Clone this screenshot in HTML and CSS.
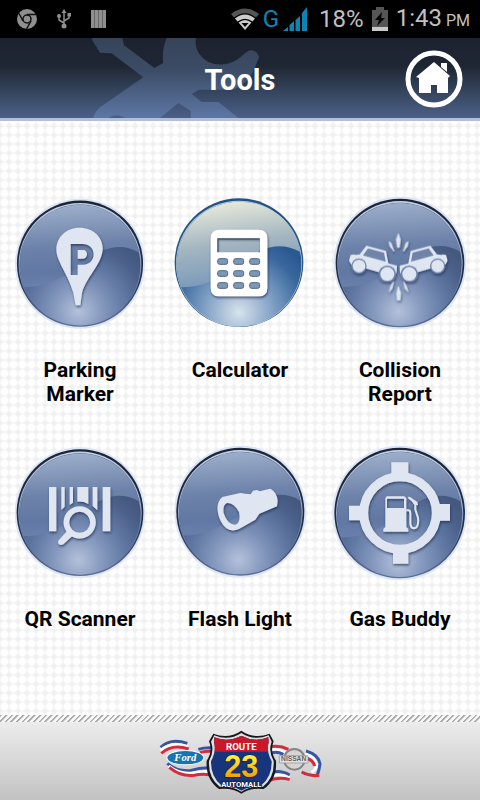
FILE: index.html
```html
<!DOCTYPE html>
<html lang="en">
<head>
    <meta charset="UTF-8">
    <meta name="viewport" content="width=device-width, initial-scale=1">
    <title>Tools</title>
    <link rel="stylesheet" href="styles.css">
</head>
<body>
    <!-- shared gradients and the glass disc -->
    <svg class="defs" width="0" height="0" aria-hidden="true">
        <defs>
            <radialGradient id="disc-base" gradientUnits="userSpaceOnUse" cx="195" cy="345" r="240">
                <stop offset="0" stop-color="#b3c1da"/>
                <stop offset="0.3" stop-color="#8699be"/>
                <stop offset="0.6" stop-color="#6078a3"/>
                <stop offset="0.85" stop-color="#4b618a"/>
                <stop offset="1" stop-color="#455980"/>
            </radialGradient>
            <linearGradient id="disc-gloss" x1="0.3" y1="0" x2="0.4" y2="1">
                <stop offset="0" stop-color="#9dafcb"/>
                <stop offset="0.5" stop-color="#6d82aa"/>
                <stop offset="0.8" stop-color="#6078a3"/>
                <stop offset="1" stop-color="#6a82ac"/>
            </linearGradient>
            <linearGradient id="disc-rim" x1="0" y1="0" x2="0" y2="1">
                <stop offset="0" stop-color="#1a2538"/>
                <stop offset="0.6" stop-color="#1f2c45"/>
                <stop offset="1" stop-color="#5c7196"/>
            </linearGradient>
            <linearGradient id="disc-edge" x1="0" y1="0" x2="0" y2="1">
                <stop offset="0" stop-color="#c3d0e4"/>
                <stop offset="0.5" stop-color="#94a7c6"/>
                <stop offset="0.8" stop-color="#5b7199"/>
            </linearGradient>
            <radialGradient id="calc-base" gradientUnits="userSpaceOnUse" cx="200" cy="350" r="240">
                <stop offset="0" stop-color="#d8e2ec"/>
                <stop offset="0.4" stop-color="#86a5c8"/>
                <stop offset="0.8" stop-color="#3a689e"/>
                <stop offset="1" stop-color="#2a5890"/>
            </radialGradient>
            <linearGradient id="calc-gloss" x1="0.3" y1="0" x2="0.5" y2="1">
                <stop offset="0" stop-color="#e9ecdc"/>
                <stop offset="0.5" stop-color="#a3b5c0"/>
                <stop offset="1" stop-color="#7597b9"/>
            </linearGradient>
            <linearGradient id="tool-fill" x1="0" y1="0" x2="0" y2="1">
                <stop offset="0" stop-color="#364459"/>
                <stop offset="0.4" stop-color="#3c4c66"/>
                <stop offset="1" stop-color="#5d77a5"/>
            </linearGradient>
            <filter id="shade" x="-20%" y="-20%" width="140%" height="140%">
                <feDropShadow dx="2" dy="5" stdDeviation="3" flood-color="#1d2b48" flood-opacity="0.7"/>
            </filter>
            <symbol id="disc" viewBox="0 0 400 400">
                <circle cx="200" cy="200" r="199" fill="#dce5f5"/>
                <circle cx="200" cy="200" r="193" fill="url(#disc-rim)"/>
                <circle cx="200" cy="202" r="188" fill="url(#disc-edge)"/>
                <circle cx="200" cy="204" r="185" fill="url(#disc-base)"/>
                <path d="M28 272C19 250 15 228 15 204C15 102 98 20 200 20C288 20 362 80 381 166C345 143 300 144 262 163C235 178 220 200 180 222C130 250 90 272 28 272Z" fill="url(#disc-gloss)"/>
            </symbol>
            <symbol id="car" viewBox="0 0 146 112">
                <path d="M5 31L15 29L19 31L32 29L52 3L111 19L118 56L144 63L143 82L137 96L88 82L46 70L13 68L4 55L0 48Z" fill="#dfe6f2"/>
                <path d="M57 11L105 24L110 51L42 32Z" fill="#6f84aa"/>
                <circle cx="30" cy="64" r="23" fill="#6f84aa"/>
                <circle cx="30" cy="64" r="19" fill="#dfe6f2"/>
                <circle cx="115" cy="88" r="26" fill="#6f84aa"/>
                <circle cx="115" cy="88" r="21" fill="#dfe6f2"/>
            </symbol>
        </defs>
    </svg>

    <div class="status-bar">
        <div class="status-left">
            <svg width="20" height="20" viewBox="0 0 20 20" aria-hidden="true">
                <circle cx="10" cy="10" r="10" fill="#8f8f8f"/>
                <circle cx="10" cy="10" r="4" fill="none" stroke="#111" stroke-width="1.5"/>
                <path d="M10 5.5H19M6 12L2 4.5M14 12L9.5 20" stroke="#111" stroke-width="1.5"/>
            </svg>
            <svg width="14" height="20" viewBox="0 0 14 20" aria-hidden="true">
                <path d="M7 3V17M7 14L2 11V7M7 12L12 9V6" fill="none" stroke="#8f8f8f" stroke-width="1.5"/>
                <path d="M7 0L9.5 4H4.5ZM10.5 4H14V7.5H10.5Z" fill="#8f8f8f"/>
                <circle cx="2" cy="7" r="2" fill="#8f8f8f"/>
                <circle cx="7" cy="17" r="2.5" fill="#8f8f8f"/>
            </svg>
            <svg width="15" height="20" viewBox="0 0 15 20" aria-hidden="true">
                <path d="M0 1H15V19H0Z" fill="#666"/>
                <path d="M0 1H3V19H0ZM4 1H7V19H4ZM8 1H11V19H8ZM12 1H15V19H12Z" fill="#8f8f8f"/>
            </svg>
        </div>
        <div class="status-right">
            <svg width="28" height="22" viewBox="0 0 28 22" aria-hidden="true">
                <path d="M0 6Q14 -5 28 6L25 9.5Q14 1 3 9.5Z" fill="#555"/>
                <path d="M4 10.5Q14 2.5 24 10.5L21.5 13.5Q14 8 6.5 13.5Z" fill="#ccc"/>
                <path d="M7.5 14.5Q14 9.5 20.5 14.5L14 22Z" fill="#ccc"/>
                <path d="M10.5 15H17.5L14 19Z" fill="#000"/>
            </svg>
            <span class="network">G</span>
            <svg class="signal" width="24" height="24" viewBox="0 0 24 24" aria-hidden="true">
                <path d="M0 24L5 20V24ZM6.5 18L11 14V24H6.5ZM12.5 13L17 9V24H12.5ZM19 6L24 0V24H19Z" fill="#0d84b5"/>
            </svg>
            <span class="percent">18%</span>
            <svg class="battery" width="16" height="24" viewBox="0 0 16 24" aria-hidden="true">
                <path d="M4 0H12V3H16V20H0V3H4Z" fill="#555"/>
                <path d="M0 20H16V24H0Z" fill="#c8c8c8"/>
                <path d="M10 5L3 13H7L5 19L13 11H9Z" fill="#000"/>
            </svg>
            <span class="clock">1:43<small>PM</small></span>
        </div>
    </div>

    <header class="header">
        <svg class="header-art" width="260" height="80" viewBox="0 0 780 240" aria-hidden="true">
            <path d="M275 4L300 44L335 46L430 118L300 208Q285 220 280 240H325Q350 223 375 240H480L535 195L572 218V240H715L655 192H605L575 168L597 155H700Q748 135 765 88L777 58Q770 32 745 38L710 66Q668 90 625 72Q580 46 588 0H500Q484 40 490 75L463 90L372 22L367 0H278Z" fill="url(#tool-fill)"/>
        </svg>
        <h1>Tools</h1>
        <button class="home-button" type="button" aria-label="Home">
            <svg width="58" height="58" viewBox="0 0 58 58" aria-hidden="true">
                <circle cx="29" cy="29" r="26" fill="none" stroke="#fff" stroke-width="5"/>
                <path d="M29 12L45 26L43 28V43H32V35H26V43H14V28L11 27Z" fill="#fff"/>
                <path d="M36 13H42V22L36 17Z" fill="#fff"/>
            </svg>
        </button>
    </header>

    <main class="tools">
        <a class="tool" href="#parking">
            <svg class="tool-icon" viewBox="42 36 396 396" aria-hidden="true">
                <use href="#disc" x="44" y="40" width="392" height="392"/>
                <g filter="url(#shade)">
                    <path fill-rule="evenodd" d="M239 128C198 128 169 157 169 194C169 228 205 269 220 323L227 361H241L246 323C261 272 308 236 308 190C308 156 279 128 239 128ZM212 177H249C292 177 291 239 249 239H233V270H212ZM233 195V221H249C265 221 265 195 249 195Z" fill="#dfe6f2"/>
                </g>
            </svg>
            <span class="tool-name">Parking Marker</span>
        </a>
        <a class="tool" href="#calculator">
            <svg class="tool-icon" viewBox="42 36 396 396" aria-hidden="true">
                <svg x="38" y="34" width="398" height="398" viewBox="0 0 400 400">
                    <circle cx="200" cy="200" r="194" fill="#245484"/>
                    <circle cx="200" cy="203" r="190" fill="#b9cedf"/>
                    <circle cx="200" cy="204" r="188" fill="url(#calc-base)"/>
                    <path d="M26 274C16 250 12 228 12 204C12 100 96 16 200 16C293 16 369 78 385 168C345 144 300 146 265 165C235 180 220 202 180 225C130 252 90 274 26 274Z" fill="url(#calc-gloss)"/>
                </svg>
                <g filter="url(#shade)">
                    <path fill-rule="evenodd" d="M178 134H296Q322 134 322 160V308Q322 334 296 334H178Q152 334 152 308V160Q152 134 178 134ZM172 160V202H300V160Z" fill="#fff"/>
                </g>
                <path d="M174 202V162H298" fill="none" stroke="#4c6079" stroke-width="4"/>
                <g fill="#7c98b7" stroke="#50657f" stroke-width="3">
                    <rect x="173" y="221" width="30" height="17" rx="6"/>
                    <rect x="221" y="221" width="30" height="17" rx="6"/>
                    <rect x="269" y="221" width="30" height="17" rx="6"/>
                    <rect x="173" y="257" width="30" height="17" rx="6"/>
                    <rect x="221" y="257" width="30" height="17" rx="6"/>
                    <rect x="269" y="257" width="30" height="17" rx="6"/>
                    <rect x="173" y="293" width="30" height="17" rx="6"/>
                    <rect x="221" y="293" width="30" height="17" rx="6"/>
                    <rect x="269" y="293" width="30" height="17" rx="6"/>
                </g>
            </svg>
            <span class="tool-name">Calculator</span>
        </a>
        <a class="tool" href="#collision">
            <svg class="tool-icon" viewBox="42 36 396 396" aria-hidden="true">
                <use href="#disc" x="40" y="34" width="400" height="400"/>
                <g filter="url(#shade)">
                    <use href="#car" x="87" y="179" width="146" height="112"/>
                    <use href="#car" x="87" y="179" width="146" height="112" transform="translate(470 0) scale(-1 1)"/>
                    <path d="M235 146L241 163L238 187H232L229 163ZM207 170L213 174L222 199L210 184ZM264 170L258 174L250 199L262 184ZM220 291L212 304L208 320L216 310ZM251 291L259 304L264 320L255 310ZM235 304L230 324L232 345H240L242 324Z" fill="#dfe6f2" stroke="#dfe6f2" stroke-width="2"/>
                </g>
            </svg>
            <span class="tool-name">Collision Report</span>
        </a>
        <a class="tool" href="#qr">
            <svg class="tool-icon" viewBox="42 33 396 396" aria-hidden="true">
                <use href="#disc" x="43" y="36" width="394" height="394"/>
                <g filter="url(#shade)">
                    <path d="M147 156H169V289H147ZM184 156H194V215L184 225ZM209 156H219V203L209 210ZM232 156H265V207Q248 198 232 200ZM278 156H292V226L278 213ZM308 156H331V289H308Z" fill="#dfe6f2"/>
                    <circle cx="239" cy="262" r="40" fill="none" stroke="#dfe6f2" stroke-width="17"/>
                    <path d="M206 283L175 317Q172 328 183 330L190 328L218 302Z" fill="#dfe6f2"/>
                </g>
            </svg>
            <span class="tool-name">QR Scanner</span>
        </a>
        <a class="tool" href="#flashlight">
            <svg class="tool-icon" viewBox="42 33 396 396" aria-hidden="true">
                <use href="#disc" x="42" y="31" width="398" height="398"/>
                <g filter="url(#shade)">
                    <path fill-rule="evenodd" d="M187 186L241 174L256 176L272 178L279 167L291 165L299 169L331 161Q350 170 353 197L351 214L298 236L286 254L237 282Q202 297 182 258C169 230 168 202 187 186ZM201 204Q187 210 191 235Q203 270 226 269Q243 264 237 231Q222 203 201 204Z" fill="#dfe6f2"/>
                </g>
            </svg>
            <span class="tool-name">Flash Light</span>
        </a>
        <a class="tool" href="#gas">
            <svg class="tool-icon" viewBox="42 33 396 396" aria-hidden="true">
                <use href="#disc" x="36" y="31" width="406" height="406"/>
                <g filter="url(#shade)">
                    <circle cx="240" cy="234" r="109" fill="none" stroke="#dfe6f2" stroke-width="27"/>
                    <path d="M214 82H265V128H214ZM219 340H265V386H219ZM87 212H130V256H87ZM347 207H390V257H347Z" fill="#dfe6f2"/>
                    <path fill-rule="evenodd" d="M200 184H253L259 190V276L265 282V290H190V282L196 276V190ZM201 191V219H252V191Z" fill="#dfe6f2"/>
                    <path d="M259 226H265Q271 226 271 236V265Q272 280 283 280Q297 278 294 248L286 224V204L265 187" fill="none" stroke="#dfe6f2" stroke-width="6"/>
                    <path d="M269 185L292 201L294 211L281 208Z" fill="#dfe6f2"/>
                </g>
            </svg>
            <span class="tool-name">Gas Buddy</span>
        </a>
    </main>

    <footer class="footer">
        <svg width="164" height="64" viewBox="24 76 492 192" role="img" aria-label="Route 23 Automall">
            <defs>
                <linearGradient id="gold" x1="0" y1="0" x2="0" y2="1">
                    <stop offset="0.2" stop-color="#fff33a"/>
                    <stop offset="0.8" stop-color="#f6a500"/>
                </linearGradient>
                <clipPath id="shield">
                    <path d="M193 98Q234 114 274 93Q314 114 355 98L356 113Q348 139 365 170Q366 216 334 242Q302 241 274 258Q246 241 214 242Q182 216 183 170Q200 139 192 113Z"/>
                </clipPath>
            </defs>
            <g fill="none" stroke-width="9">
                <path d="M32 128Q62 99 112 116M145 134Q165 128 190 130" stroke="#3655a5"/>
                <path d="M32 138Q62 109 112 126" stroke="#fff"/>
                <path d="M34 146Q67 116 116 133M150 144Q165 138 190 140" stroke="#d52b3c"/>
                <path d="M52 176Q80 201 120 198Q160 186 195 191" stroke="#3655a5"/>
                <path d="M56 184Q88 210 128 205Q164 197 195 203" stroke="#fff"/>
                <path d="M58 188Q90 216 133 212Q164 205 195 214" stroke="#d52b3c"/>
                <path d="M350 129Q385 119 415 134" stroke="#d52b3c"/>
                <path d="M350 140Q379 128 405 143" stroke="#fff"/>
                <path d="M350 151Q375 135 400 149" stroke="#3655a5"/>
                <path d="M468 139Q506 150 510 178Q508 196 500 216" stroke="#3655a5"/>
                <path d="M466 148Q496 158 500 180Q499 196 484 203" stroke="#fff"/>
                <path d="M470 160Q490 168 494 184M455 202Q480 216 508 212" stroke="#d52b3c"/>
                <path d="M350 207Q388 193 419 211" stroke="#3655a5"/>
                <path d="M350 218Q388 202 419 220" stroke="#fff"/>
                <path d="M350 229Q388 215 419 225" stroke="#d52b3c"/>
            </g>
            <ellipse cx="106" cy="159" rx="57" ry="23" fill="#fff"/>
            <ellipse cx="106" cy="159" rx="54" ry="20" fill="#1774af"/>
            <text class="ford" x="106" y="168" text-anchor="middle">Ford</text>
            <circle cx="433" cy="164" r="31" fill="#d5d5d5" stroke="#858585" stroke-width="6"/>
            <path d="M388 153H474V175H388Z" fill="#e0e0e0" stroke="#8b8b8b" stroke-width="2"/>
            <text class="nissan" x="431" y="170" text-anchor="middle">NISSAN</text>
            <path d="M190 87Q235 105 274 78Q313 105 359 87L371 110Q359 140 378 168Q382 224 341 253Q302 248 274 267Q246 248 207 253Q166 224 170 168Q189 140 177 110Z" fill="#17191e"/>
            <path d="M193 92Q235 110 274 85Q313 110 356 92L365 111Q354 140 371 169Q374 220 338 247Q302 243 274 261Q246 243 210 247Q174 220 177 169Q194 140 183 111Z" fill="#dce0e4"/>
            <g clip-path="url(#shield)">
                <path d="M170 80H380V270H170Z" fill="#17347c"/>
                <path d="M170 80H380V141H170Z" fill="#c91929"/>
            </g>
            <text class="route" x="274" y="135" text-anchor="middle">ROUTE</text>
            <text class="number" x="274" y="217" text-anchor="middle">23</text>
            <text class="automall" x="274" y="248" text-anchor="middle">AUTOMALL</text>
        </svg>
    </footer>
</body>
</html>
```
FILE: styles.css
```css
* {
    box-sizing: border-box;
}

body {
    margin: 0;
    min-height: 100vh;
    display: flex;
    flex-direction: column;
    font-family: Roboto, "Liberation Sans", sans-serif;
    color: #000;
    background-color: #f0f0f0;
    background-image: radial-gradient(circle, #fff 3px, transparent 5px);
    background-size: 9px 9px;
}

.defs {
    position: absolute;
}

.status-bar {
    display: flex;
    justify-content: space-between;
    align-items: center;
    height: 38px;
    padding: 0 10px 0 17px;
    background-color: #000;
    color: #c0c0c0;
}

.status-left,
.status-right {
    display: flex;
    align-items: center;
}

.status-left {
    gap: 20px;
}

.status-right {
    font-size: 24px;
    line-height: 40px;
}

.network {
    margin-left: 4px;
    color: #0d84b5;
}

.signal {
    margin-left: 4px;
}

.percent {
    margin-left: 12px;
}

.battery {
    margin: 0 8px;
}

.clock small {
    margin-left: 4px;
    font-size: 16px;
}

.header {
    position: relative;
    display: flex;
    align-items: center;
    justify-content: center;
    height: 83px;
    border-bottom: 3px solid #b3bfd8;
    background: linear-gradient(#1d2230 0%, #1f2633 35%, #33435b 65%, #4b6088 100%);
}

.header-art {
    position: absolute;
    left: 0;
    top: 0;
}

.header h1 {
    position: relative;
    margin: 0;
    padding-top: 4px;
    font-size: 29px;
    line-height: 32px;
    font-weight: bold;
    color: #fff;
}

.home-button {
    position: absolute;
    right: 17px;
    top: 12px;
    padding: 0;
    border: none;
    background: none;
    cursor: pointer;
}

.home-button svg {
    display: block;
}

.tools {
    flex: 1;
    display: grid;
    grid-template-columns: repeat(3, 1fr);
    align-content: start;
    row-gap: 40px;
    padding: 76px 0 40px;
}

.tool {
    display: flex;
    flex-direction: column;
    align-items: center;
    gap: 29px;
    color: #000;
    text-decoration: none;
}

.tool-icon {
    width: 132px;
    height: 132px;
    overflow: visible;
}

.tool-name {
    max-width: 120px;
    font-size: 21px;
    line-height: 24px;
    font-weight: bold;
    text-align: center;
}

.footer {
    display: flex;
    justify-content: center;
    padding: 15px 0 6px;
    background: linear-gradient(#f0f0f0, #c2c2c2);
}

.footer::before {
    content: "";
    position: absolute;
    left: 0;
    right: 0;
    height: 7px;
    margin-top: -15px;
    background: repeating-linear-gradient(135deg, #aaa 0 1px, #f8f8f8 2px 4px);
}

.footer svg {
    display: block;
}

.ford {
    font: italic bold 32px "Liberation Serif", serif;
    fill: #fff;
}

.nissan {
    font: bold 20px "Liberation Sans", sans-serif;
    fill: #666;
}

.route {
    font: bold 29px Roboto, sans-serif;
    fill: #fff;
}

.number {
    font: bold 92px "Liberation Sans", sans-serif;
    fill: url(#gold);
    stroke: #10214d;
    stroke-width: 4px;
    paint-order: stroke;
}

.automall {
    font: bold 23px Roboto, sans-serif;
    fill: #fff;
    stroke: #10214d;
    stroke-width: 5px;
    paint-order: stroke;
}
```
